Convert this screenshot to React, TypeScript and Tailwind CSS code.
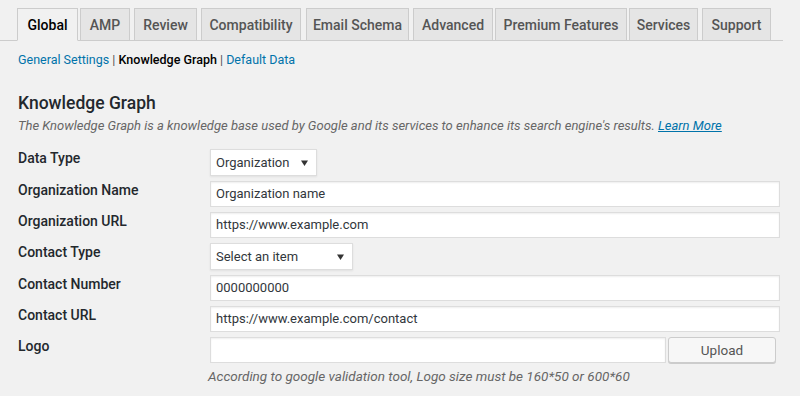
const tabs: { label: string; w: string; ml: string }[] = [
  { label: "Global", w: "w-[61px]", ml: "ml-0" },
  { label: "AMP", w: "w-[50px]", ml: "ml-[2px]" },
  { label: "Review", w: "w-[63px]", ml: "ml-[4px]" },
  { label: "Compatibility", w: "w-[100px]", ml: "ml-[4px]" },
  { label: "Email Schema", w: "w-[103px]", ml: "ml-[5px]" },
  { label: "Advanced", w: "w-[80px]", ml: "ml-[4px]" },
  { label: "Premium Features", w: "w-[132px]", ml: "ml-[2px]" },
  { label: "Services", w: "w-[69px]", ml: "ml-[2px]" },
  { label: "Support", w: "w-[69px]", ml: "ml-[4px]" },
];

function Caret() {
  return (
    <svg width="7" height="6" viewBox="0 0 7 6" className="shrink-0">
      <path d="M0 0.5h7L3.5 6z" fill="#333" />
    </svg>
  );
}

function Select({ value, width }: { value: string; width: string }) {
  return (
    <div
      className={`flex h-[27px] items-center justify-between border border-[#ddd] bg-white pl-[5px] pr-[8px] text-[13px] text-[#32373c] shadow-[0_1px_2px_rgba(0,0,0,0.07)] ${width}`}
    >
      <span>{value}</span>
      <Caret />
    </div>
  );
}

function TextInput({ value, className = "" }: { value?: string; className?: string }) {
  return (
    <div
      className={`flex h-[26px] items-center border border-[#ddd] bg-white pl-[5px] text-[13px] text-[#32373c] shadow-[inset_0_1px_2px_rgba(0,0,0,0.07)] ${className}`}
    >
      {value}
    </div>
  );
}

function Row({ label, children }: { label: string; children: React.ReactNode }) {
  return (
    <div className="flex">
      <div className="w-[192px] shrink-0 whitespace-nowrap text-[14px] font-medium leading-[18px] text-[#23282d]">
        {label}
      </div>
      <div className="flex-1">{children}</div>
    </div>
  );
}

export default function App() {
  return (
    <div
      className="h-[396px] w-[800px] overflow-hidden bg-[#f1f1f1] text-[13px] text-[#444]"
      style={{ fontFamily: 'Roboto, "Noto Sans", sans-serif' }}
    >
      <div className="mr-[17px] flex border-b border-[#ccc] pl-[17px] pt-[8px]">
        {tabs.map((t, i) => (
          <div
            key={t.label}
            className={`-mb-px flex h-[33px] items-center justify-center whitespace-nowrap border border-[#ccc] pt-px text-[14px] font-medium ${t.w} ${t.ml} ${
              i === 0 ? "border-b-[#f1f1f1] bg-[#f1f1f1] text-black" : "bg-[#e5e5e5] text-[#555]"
            }`}
          >
            {t.label}
          </div>
        ))}
      </div>

      <div className="px-[18px]">
        <div className="mt-[10px] text-[12.5px] leading-[18px]">
          <span className="text-[#0073aa]">General Settings</span>
          <span className="text-[#555]"> | </span>
          <span className="font-medium text-black">Knowledge Graph</span>
          <span className="text-[#555]"> | </span>
          <span className="text-[#0073aa]">Default Data</span>
        </div>

        <h2 className="mt-[23px] text-[17.5px] font-medium leading-[22px] text-[#23282d]">
          Knowledge Graph
        </h2>
        <p className="mt-[3px] whitespace-nowrap text-[13px] italic leading-[18px] text-[#666]">
          The Knowledge Graph is a knowledge base used by Google and its services to enhance its
          search engine's results.{" "}
          <span className="text-[#0073aa] underline">Learn More</span>
        </p>

        <div className="mt-[14px] flex w-[762px] flex-col gap-[5px]">
          <Row label="Data Type">
            <Select value="Organization" width="w-[107px]" />
          </Row>
          <Row label="Organization Name">
            <TextInput value="Organization name" />
          </Row>
          <Row label="Organization URL">
            <TextInput value="https://www.example.com" />
          </Row>
          <Row label="Contact Type">
            <Select value="Select an item" width="w-[143px]" />
          </Row>
          <Row label="Contact Number">
            <TextInput value="0000000000" />
          </Row>
          <Row label="Contact URL">
            <TextInput value="https://www.example.com/contact" />
          </Row>
          <Row label="Logo">
            <div className="flex items-start gap-[2px]">
              <TextInput className="w-[456px]" />
              <div className="flex h-[26px] w-[108px] items-center justify-center rounded-[3px] border border-[#ccc] bg-[#f7f7f7] text-[13.5px] text-[#555] shadow-[0_1px_0_#ccc]">
                Upload
              </div>
            </div>
            <p className="ml-[-2px] mt-[4px] whitespace-nowrap text-[13.5px] italic leading-[18px] text-[#666]">
              According to google validation tool, Logo size must be 160*50 or 600*60
            </p>
          </Row>
        </div>
      </div>
    </div>
  );
}
